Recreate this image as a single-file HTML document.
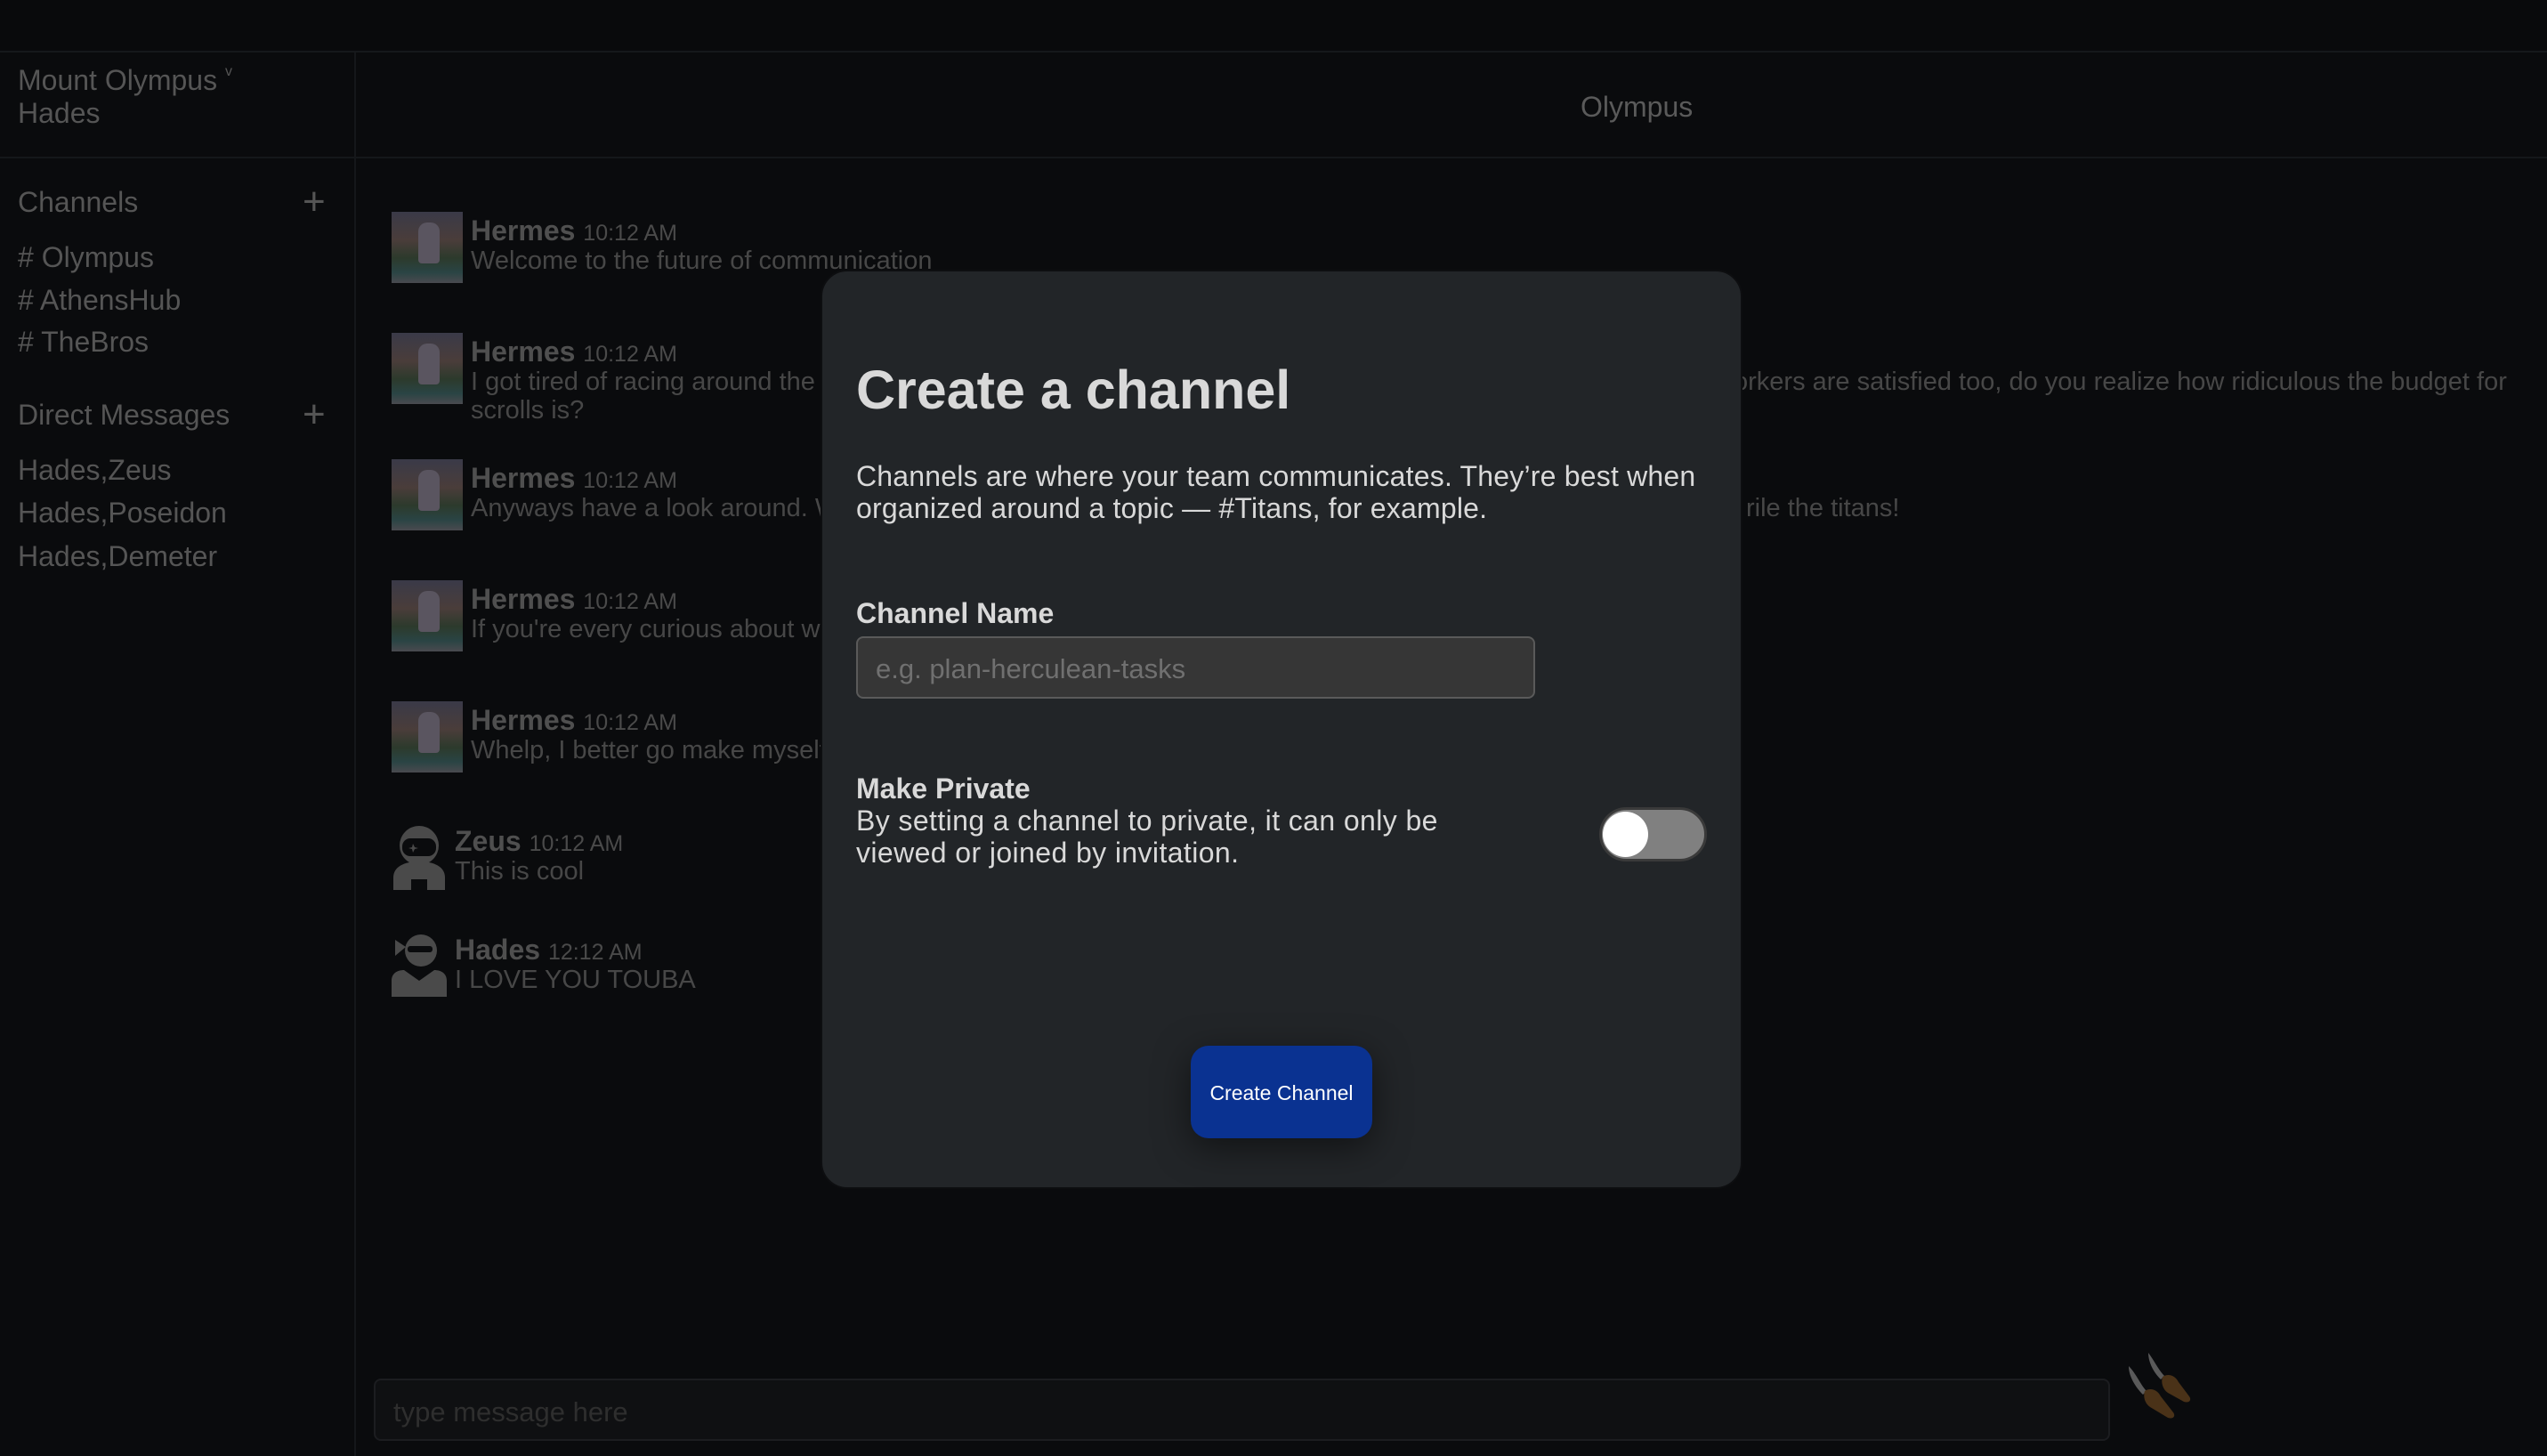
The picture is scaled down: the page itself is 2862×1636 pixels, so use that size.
<!DOCTYPE html>
<html><head><meta charset="utf-8">
<style>
*{margin:0;padding:0;box-sizing:border-box}
body{width:2862px;height:1636px;background:#0a0b0d;font-family:"Liberation Sans",Arial,sans-serif;color:#4d4d4d;position:relative;overflow:hidden}
.a{position:absolute;white-space:nowrap}
.topbar{position:absolute;left:0;top:0;width:2862px;height:59px;background:#090a0c;border-bottom:2px solid #16181b}
.side{position:absolute;left:0;top:59px;width:400px;height:1577px;border-right:2px solid #15171a}
.hdiv{position:absolute;left:0;top:176px;width:2862px;height:2px;background:#15171a}
.sb{font-size:32px;color:#555}
.plus{font-size:44px;color:#555;font-weight:300}
.av{position:absolute;width:80px;height:80px;background:linear-gradient(180deg,#3a3a48 0%,#4a3d3a 40%,#2c3a2c 65%,#2a4444 85%,#4a4a4f 100%);overflow:hidden}
.av i{position:absolute;left:30px;top:12px;width:24px;height:46px;background:#5a5560;border-radius:10px 10px 4px 4px}
.name{font-size:32px;font-weight:bold;color:#4f4f4f}
.time{font-size:25px;color:#4a4a4a;font-weight:normal}
.msg{font-size:29px;color:#474747}
.modal{position:absolute;left:922px;top:303px;width:1036px;height:1033px;background:#222528;border-radius:30px;border:2px solid #0d0e10}
</style></head><body>
<div class="topbar"></div>
<div class="side"></div>
<div class="hdiv"></div>

<div class="a sb" style="left:20px;top:72px">Mount Olympus <span style="font-size:16px;vertical-align:top">v</span></div>
<div class="a sb" style="left:20px;top:109px">Hades</div>
<div class="a" style="left:1776px;top:102px;font-size:32px;color:#5a5a5a">Olympus</div>

<div class="a sb" style="left:20px;top:209px">Channels</div>
<div class="a plus" style="left:340px;top:202px">+</div>
<div class="a sb" style="left:20px;top:271px"># Olympus</div>
<div class="a sb" style="left:20px;top:319px"># AthensHub</div>
<div class="a sb" style="left:20px;top:366px"># TheBros</div>
<div class="a sb" style="left:20px;top:448px">Direct Messages</div>
<div class="a plus" style="left:340px;top:441px">+</div>
<div class="a sb" style="left:20px;top:510px">Hades,Zeus</div>
<div class="a sb" style="left:20px;top:558px">Hades,Poseidon</div>
<div class="a sb" style="left:20px;top:607px">Hades,Demeter</div>

<div class="av" style="left:440px;top:238px"><i></i></div>
<div class="a name" style="left:529px;top:241px">Hermes <span class="time">10:12 AM</span></div>
<div class="a msg" style="left:529px;top:277px">Welcome to the future of communication</div>

<div class="av" style="left:440px;top:374px"><i></i></div>
<div class="a name" style="left:529px;top:377px">Hermes <span class="time">10:12 AM</span></div>
<div class="a msg" style="left:529px;top:413px">I got tired of racing around the globe</div>
<div class="a msg" style="left:1948px;top:413px">orkers are satisfied too, do you realize how ridiculous the budget for</div>
<div class="a msg" style="left:529px;top:445px">scrolls is?</div>

<div class="av" style="left:440px;top:516px"><i></i></div>
<div class="a name" style="left:529px;top:519px">Hermes <span class="time">10:12 AM</span></div>
<div class="a msg" style="left:529px;top:555px">Anyways have a look around. We</div>
<div class="a msg" style="left:1962px;top:555px">rile the titans!</div>

<div class="av" style="left:440px;top:652px"><i></i></div>
<div class="a name" style="left:529px;top:655px">Hermes <span class="time">10:12 AM</span></div>
<div class="a msg" style="left:529px;top:691px">If you're every curious about wh</div>

<div class="av" style="left:440px;top:788px"><i></i></div>
<div class="a name" style="left:529px;top:791px">Hermes <span class="time">10:12 AM</span></div>
<div class="a msg" style="left:529px;top:827px">Whelp, I better go make myself</div>

<svg class="a" style="left:440px;top:928px" width="62" height="72" viewBox="0 0 62 72">
<circle cx="31" cy="22" r="22" fill="#4a4a4a"/><rect x="12" y="14" width="38" height="20" rx="9" fill="#0a0b0d"/>
<path d="M24 20l2 4 4 1-4 1-2 4-1-4-4-1 4-1z" fill="#4a4a4a"/>
<path d="M2 72v-14c0-12 12-18 29-18s29 6 29 18v14z" fill="#4a4a4a"/>
<rect x="22" y="60" width="18" height="12" fill="#0a0b0d"/></svg>
<div class="a name" style="left:511px;top:927px">Zeus <span class="time">10:12 AM</span></div>
<div class="a msg" style="left:511px;top:963px">This is cool</div>

<svg class="a" style="left:440px;top:1050px" width="62" height="70" viewBox="0 0 62 70">
<circle cx="33" cy="18" r="18" fill="#4a4a4a"/><rect x="18" y="13" width="28" height="7" rx="3" fill="#0a0b0d"/>
<path d="M4 6l12 8-12 10z" fill="#4a4a4a"/>
<path d="M0 70v-18c0-8 6-12 14-12l17 12 17-12c8 0 14 4 14 12v18z" fill="#4a4a4a"/></svg>
<div class="a name" style="left:511px;top:1049px">Hades <span class="time">12:12 AM</span></div>
<div class="a msg" style="left:511px;top:1085px">I LOVE YOU TOUBA</div>

<div class="a" style="left:420px;top:1549px;width:1951px;height:70px;background:#0f1012;border:2px solid #1c1d20;border-radius:8px"></div>
<div class="a" style="left:442px;top:1569px;font-size:31px;color:#2e2e2e">type message here</div>
<svg class="a" style="left:2382px;top:1515px" width="85" height="85" viewBox="0 0 85 85">
<path d="M10 20c8 8 14 22 20 28l-4 4C18 44 10 32 10 20z" fill="#5a5a5a"/>
<path d="M32 5c6 8 12 20 18 26l-4 4C38 27 32 16 32 5z" fill="#5a5a5a"/>
<path d="M28 48c6-4 14-2 18 6l14 18c3 4 0 8-6 6L34 66c-6-4-8-12-6-18z" fill="#4a3218"/>
<path d="M48 32c6-4 14-2 18 6l12 16c3 4 0 8-6 6L54 50c-6-4-8-12-6-18z" fill="#4a3218"/></svg>

<div class="modal"></div>
<div class="a" style="left:962px;top:403px;font-size:61px;font-weight:bold;color:#d9d9d9">Create a channel</div>
<div class="a" style="left:962px;top:517px;font-size:32px;line-height:36px;color:#d9d9d9;letter-spacing:0.2px">Channels are where your team communicates. They’re best when<br>organized around a topic — #Titans, for example.</div>
<div class="a" style="left:962px;top:671px;font-size:32px;font-weight:bold;color:#d9d9d9">Channel Name</div>
<div class="a" style="left:962px;top:715px;width:763px;height:70px;background:#363636;border:2px solid #5a5a5a;border-radius:8px"></div>
<div class="a" style="left:984px;top:734px;font-size:31px;color:#707070">e.g. plan-herculean-tasks</div>
<div class="a" style="left:962px;top:868px;font-size:32px;font-weight:bold;color:#d9d9d9">Make Private</div>
<div class="a" style="left:962px;top:904px;font-size:32px;line-height:36px;color:#d9d9d9;letter-spacing:0.4px">By setting a channel to private, it can only be<br>viewed or joined by invitation.</div>
<div class="a" style="left:1797px;top:907px;width:121px;height:61px;background:#808080;border-radius:31px;border:3px solid #3a3a3a"></div>
<div class="a" style="left:1801px;top:912px;width:51px;height:51px;background:#fff;border-radius:50%"></div>
<div class="a" style="left:1338px;top:1175px;width:204px;height:104px;background:#0a3291;border-radius:20px;box-shadow:0 10px 40px rgba(0,0,0,.5);color:#fff;font-size:23px;text-align:center;line-height:106px">Create Channel</div>
</body></html>
